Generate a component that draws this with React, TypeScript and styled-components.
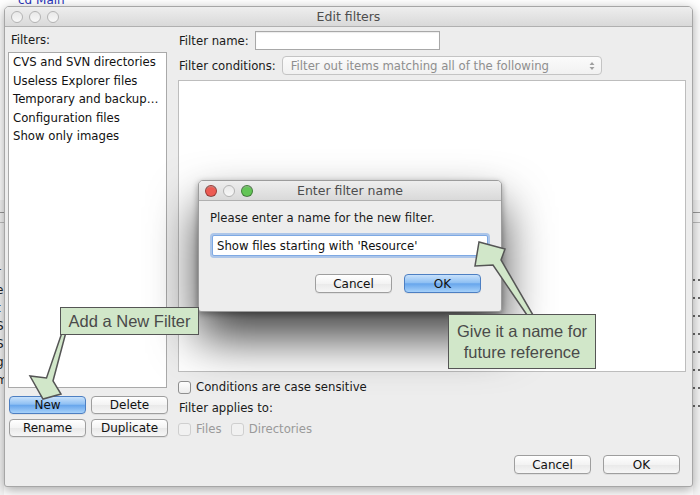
import React from 'react';
import { styled, createGlobalStyle, css } from 'styled-components';

const GlobalStyle = createGlobalStyle`
  html, body {
    margin: 0;
    padding: 0;
    background: #ffffff;
    font-family: "DejaVu Sans", "Noto Sans", sans-serif;
    -webkit-font-smoothing: antialiased;
  }
`;

const Scene = styled.div`
  position: relative;
  width: 700px;
  height: 495px;
  overflow: hidden;
  background: #ffffff;
`;

/* bits of the desktop that peek out behind the window */
const BackText = styled.div`
  position: absolute;
  left: 18px;
  top: -7px;
  font-size: 12px;
  color: #2a35b8;
`;

const LeftStrip = styled.div`
  position: absolute;
  left: 0;
  top: 200px;
  width: 4px;
  height: 295px;
  overflow: hidden;
  background: #f4f4f4;
`;

const StripRule = styled.div`
  height: 9px;
  border-top: 1px solid #9a9a9a;
  border-bottom: 1px solid #bdbdbd;
  margin: 12px 0 40px;
`;

const StripChar = styled.div`
  font-size: 12px;
  line-height: 18px;
  color: #222;
  margin-left: -4px;
`;

const RightStrip = styled.div`
  position: absolute;
  left: 693px;
  top: 200px;
  width: 7px;
  height: 295px;
  overflow: hidden;
  background: #f6f6f6;
`;

const Dot = styled.div`
  height: 18px;
  border-bottom: 2px dotted #666;
  box-sizing: border-box;
`;

const Window = styled.div`
  position: absolute;
  left: 4px;
  top: 6px;
  width: 689px;
  height: 481px;
  box-sizing: border-box;
  display: flex;
  flex-direction: column;
  background: #ededed;
  border: 1px solid #a6a6a6;
  border-radius: 5px 5px 3px 3px;
  box-shadow: 0 3px 12px rgba(0, 0, 0, 0.35);
  overflow: hidden;
`;

const TitleBar = styled.div`
  position: relative;
  height: 20px;
  flex: none;
  box-sizing: border-box;
  display: flex;
  align-items: center;
  gap: 6px;
  padding-left: 6px;
  background: linear-gradient(#eeeeee, #d9d9d9);
  border-bottom: 1px solid #b0b0b0;
`;

const TitleText = styled.div`
  position: absolute;
  left: 0;
  right: 0;
  top: 0;
  line-height: 19px;
  text-align: center;
  font-size: 12.5px;
  color: #4d4d4d;
  pointer-events: none;
`;

const Light = styled.span<{ $color?: string }>`
  width: 12px;
  height: 12px;
  box-sizing: border-box;
  border-radius: 50%;
  ${({ $color }) =>
    $color
      ? css`
          background: radial-gradient(circle at 50% 70%, ${$color} 30%, ${$color} 60%, rgba(0, 0, 0, 0.25) 100%);
          border: 1px solid rgba(0, 0, 0, 0.35);
        `
      : css`
          background: linear-gradient(#e9e9e9, #f8f8f8);
          border: 1px solid #b3b3b3;
        `}
`;

const Body = styled.div`
  flex: 1;
  display: flex;
  gap: 11px;
  padding-left: 3px;
  padding-right: 6px;
  min-height: 0;
`;

const LeftPane = styled.div`
  width: 159px;
  display: flex;
  flex-direction: column;
  padding-top: 4px;
  padding-bottom: 49px;
`;

const Label = styled.div<{ $muted?: boolean; $indent?: number }>`
  font-size: 11.7px;
  line-height: 18px;
  padding-left: ${({ $indent }) => $indent ?? 0}px;
  color: ${({ $muted }) => ($muted ? '#9a9a9a' : '#1a1a1a')};
  white-space: nowrap;
`;

const FilterList = styled.div`
  flex: 1;
  margin-top: 3px;
  background: #ffffff;
  border: 1px solid #a9a9a9;
  box-sizing: border-box;
`;

const FilterItem = styled.div`
  font-size: 11.7px;
  line-height: 18.5px;
  padding-left: 4px;
  padding-right: 4px;
  color: #111;
  white-space: nowrap;
  overflow: hidden;
  text-overflow: ellipsis;
`;

const ButtonGrid = styled.div`
  margin-top: 8px;
  display: grid;
  grid-template-columns: 77px 77px;
  column-gap: 5px;
  row-gap: 5px;
  padding-left: 1px;
`;

const Button = styled.button<{ $primary?: boolean; $w?: number; $h?: number }>`
  width: ${({ $w }) => ($w ? `${$w}px` : '100%')};
  height: ${({ $h }) => $h ?? 18}px;
  padding: 0;
  box-sizing: border-box;
  font-family: inherit;
  font-size: 12px;
  color: #111;
  border-radius: 4px;
  border: 1px solid #9e9e9e;
  background: linear-gradient(#ffffff, #f3f3f3 50%, #e9e9e9 51%, #f6f6f6);
  box-shadow: 0 1px 0 rgba(0, 0, 0, 0.06);
  ${({ $primary }) =>
    $primary &&
    css`
      border-color: #4d7fc2;
      background: linear-gradient(#c8e1fb, #8fc0f3 45%, #68a6ec 52%, #a6d1fa);
    `}
`;

const RightPane = styled.div`
  flex: 1;
  display: flex;
  flex-direction: column;
  padding-top: 4px;
  padding-bottom: 12px;
`;

const Row = styled.div<{ $gap?: number; $mt?: number }>`
  display: flex;
  align-items: center;
  gap: ${({ $gap }) => $gap ?? 6}px;
  margin-top: ${({ $mt }) => $mt ?? 0}px;
  min-height: 18px;
`;

const TextInput = styled.div<{ $w: number }>`
  width: ${({ $w }) => $w}px;
  height: 19px;
  box-sizing: border-box;
  background: #ffffff;
  border: 1px solid #a8a8a8;
  box-shadow: inset 0 1px 1px rgba(0, 0, 0, 0.08);
`;

const Select = styled.div`
  width: 320px;
  height: 19px;
  box-sizing: border-box;
  display: flex;
  align-items: center;
  justify-content: space-between;
  padding: 0 6px 0 8px;
  font-size: 11.7px;
  color: #8e8e8e;
  border: 1px solid #c4c4c4;
  border-radius: 4px;
  background: linear-gradient(#fbfbfb, #f1f1f1);
`;

const ConditionArea = styled.div`
  flex: 1;
  margin-top: 5px;
  background: #ffffff;
  border: 1px solid #bdbdbd;
  box-sizing: border-box;
`;

const CheckBox = styled.span<{ $disabled?: boolean }>`
  width: 13px;
  height: 13px;
  box-sizing: border-box;
  border-radius: 3px;
  border: 1px solid ${({ $disabled }) => ($disabled ? '#cfcfcf' : '#8f8f8f')};
  background: ${({ $disabled }) =>
    $disabled ? '#f1f1f1' : 'linear-gradient(#ffffff, #ececec)'};
  flex: none;
`;

const CheckItem = styled.span`
  display: inline-flex;
  align-items: center;
  gap: 5px;
`;

const Footer = styled.div`
  margin-top: 17px;
  display: flex;
  justify-content: flex-end;
  gap: 12px;
  padding-right: 6px;
`;

/* the sheet that pops over the window */
const Dialog = styled.div`
  position: absolute;
  left: 198px;
  top: 180px;
  width: 304px;
  height: 132px;
  box-sizing: border-box;
  display: flex;
  flex-direction: column;
  background: #ededed;
  border: 1px solid #9c9c9c;
  border-radius: 5px 5px 3px 3px;
  box-shadow: 0 26px 48px rgba(0, 0, 0, 0.75), 0 2px 6px rgba(0, 0, 0, 0.35);
  overflow: hidden;
`;

const DialogBody = styled.div`
  display: flex;
  flex-direction: column;
  padding: 8px 13px 0 11px;
`;

const FocusInput = styled.div`
  margin-top: 8px;
  margin-left: 2px;
  height: 21px;
  box-sizing: border-box;
  padding-left: 4px;
  display: flex;
  align-items: center;
  font-size: 11.7px;
  color: #111;
  background: #ffffff;
  border: 1px solid #7ea9e3;
  border-radius: 2px;
  box-shadow: 0 0 0 2px rgba(120, 165, 230, 0.55);
`;

const DialogButtons = styled.div`
  margin-top: 18px;
  display: flex;
  justify-content: flex-end;
  gap: 12px;
  padding-right: 7px;
`;

const Arrows = styled.svg`
  position: absolute;
  left: 0;
  top: 0;
  pointer-events: none;
`;

const Callout = styled.div<{ $x: number; $y: number; $w: number; $h: number }>`
  position: absolute;
  left: ${({ $x }) => $x}px;
  top: ${({ $y }) => $y}px;
  width: ${({ $w }) => $w}px;
  height: ${({ $h }) => $h}px;
  box-sizing: border-box;
  display: flex;
  align-items: center;
  justify-content: center;
  text-align: center;
  font-family: "Liberation Sans", Arial, sans-serif;
  font-size: 16.5px;
  line-height: 21px;
  color: #4a4a4a;
  background: #d1e7c9;
  border: 1.5px solid #555;
`;

const StepperIcon = () => (
  <svg width="6" height="10" viewBox="0 0 6 10">
    <path d="M0.5 4 L3 1 L5.5 4 Z M0.5 6 L3 9 L5.5 6 Z" fill="#a0a0a0" />
  </svg>
);

const filters = [
  'CVS and SVN directories',
  'Useless Explorer files',
  'Temporary and backup files',
  'Configuration files',
  'Show only images',
];

const stripChars = ['r', 'e', 't', 'S', 'S', 'g', 'm'];

export default function App() {
  return (
    <Scene>
      <GlobalStyle />
      <BackText>cd Main</BackText>
      <LeftStrip>
        <StripRule />
        {stripChars.map((c, i) => (
          <StripChar key={i}>{c}</StripChar>
        ))}
      </LeftStrip>
      <RightStrip>
        <StripRule />
        {Array.from({ length: 8 }).map((_, i) => (
          <Dot key={i} />
        ))}
      </RightStrip>

      <Window>
        <TitleBar>
          <Light />
          <Light />
          <Light />
          <TitleText>Edit filters</TitleText>
        </TitleBar>
        <Body>
          <LeftPane>
            <Label $indent={3}>Filters:</Label>
            <FilterList>
              {filters.map((f) => (
                <FilterItem key={f}>{f}</FilterItem>
              ))}
            </FilterList>
            <ButtonGrid>
              <Button $primary>New</Button>
              <Button>Delete</Button>
              <Button>Rename</Button>
              <Button>Duplicate</Button>
            </ButtonGrid>
          </LeftPane>
          <RightPane>
            <Row $gap={6}>
              <Label $indent={1}>Filter name:</Label>
              <TextInput $w={185} />
            </Row>
            <Row $gap={6} $mt={6}>
              <Label $indent={1}>Filter conditions:</Label>
              <Select>
                <span>Filter out items matching all of the following</span>
                <StepperIcon />
              </Select>
            </Row>
            <ConditionArea />
            <Row $mt={6}>
              <CheckItem>
                <CheckBox />
                <Label>Conditions are case sensitive</Label>
              </CheckItem>
            </Row>
            <Label $indent={1} style={{ marginTop: 3 }}>
              Filter applies to:
            </Label>
            <Row $mt={3} $gap={9}>
              <CheckItem>
                <CheckBox $disabled />
                <Label $muted>Files</Label>
              </CheckItem>
              <CheckItem>
                <CheckBox $disabled />
                <Label $muted>Directories</Label>
              </CheckItem>
            </Row>
            <Footer>
              <Button $w={77} $h={19}>Cancel</Button>
              <Button $w={77} $h={19}>OK</Button>
            </Footer>
          </RightPane>
        </Body>
      </Window>

      <Dialog>
        <TitleBar>
          <Light $color="#ec5b53" />
          <Light />
          <Light $color="#63c556" />
          <TitleText>Enter filter name</TitleText>
        </TitleBar>
        <DialogBody>
          <Label>Please enter a name for the new filter.</Label>
          <FocusInput>Show files starting with 'Resource'</FocusInput>
          <DialogButtons>
            <Button $w={77} $h={19}>Cancel</Button>
            <Button $w={77} $h={19} $primary>OK</Button>
          </DialogButtons>
        </DialogBody>
      </Dialog>

      <Arrows width="700" height="495" viewBox="0 0 700 495">
        <polygon
          points="61.5,334 65.5,334 53,381 61,394 43,399 30,376 46.5,378"
          fill="#d1e7c9"
          stroke="#555"
          strokeWidth="1.5"
          strokeLinejoin="miter"
        />
        <polygon
          points="527,315 493,265 475,266 479,242 505,249 501,260 533,315"
          fill="#d1e7c9"
          stroke="#555"
          strokeWidth="1.5"
          strokeLinejoin="miter"
        />
      </Arrows>
      <Callout $x={60} $y={307} $w={139} $h={28}>
        Add a New Filter
      </Callout>
      <Callout $x={448} $y={314} $w={148} $h={55}>
        Give it a name for
        <br />
        future reference
      </Callout>
    </Scene>
  );
}
